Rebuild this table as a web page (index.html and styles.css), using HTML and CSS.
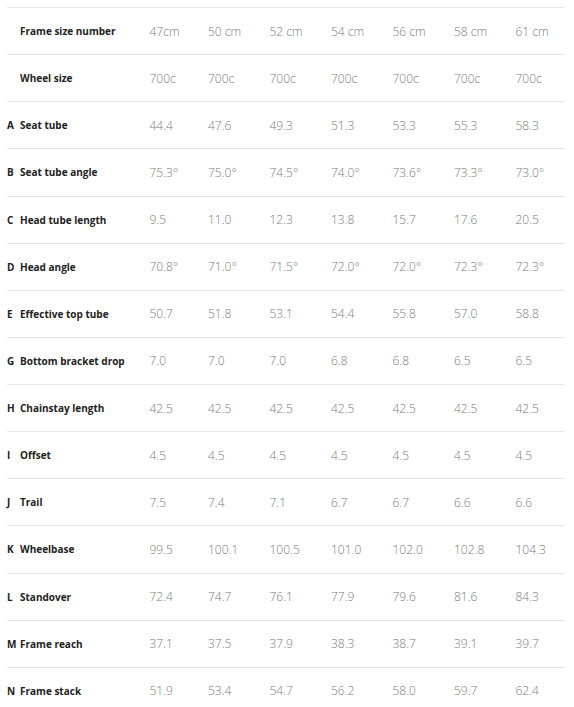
FILE: index.html
```html
<!DOCTYPE html>
<html>
<head>
<meta charset="utf-8">
<link rel="stylesheet" href="styles.css">
</head>
<body>
<div class="geo">
  <div class="row"><span class="key"></span><span class="label">Frame size number</span><span class="val">47cm</span><span class="val">50 cm</span><span class="val">52 cm</span><span class="val">54 cm</span><span class="val">56 cm</span><span class="val">58 cm</span><span class="val">61 cm</span></div>
  <div class="row"><span class="key"></span><span class="label">Wheel size</span><span class="val">700c</span><span class="val">700c</span><span class="val">700c</span><span class="val">700c</span><span class="val">700c</span><span class="val">700c</span><span class="val">700c</span></div>
  <div class="row"><span class="key">A</span><span class="label">Seat tube</span><span class="val">44.4</span><span class="val">47.6</span><span class="val">49.3</span><span class="val">51.3</span><span class="val">53.3</span><span class="val">55.3</span><span class="val">58.3</span></div>
  <div class="row"><span class="key">B</span><span class="label">Seat tube angle</span><span class="val">75.3°</span><span class="val">75.0°</span><span class="val">74.5°</span><span class="val">74.0°</span><span class="val">73.6°</span><span class="val">73.3°</span><span class="val">73.0°</span></div>
  <div class="row"><span class="key">C</span><span class="label">Head tube length</span><span class="val">9.5</span><span class="val">11.0</span><span class="val">12.3</span><span class="val">13.8</span><span class="val">15.7</span><span class="val">17.6</span><span class="val">20.5</span></div>
  <div class="row"><span class="key">D</span><span class="label">Head angle</span><span class="val">70.8°</span><span class="val">71.0°</span><span class="val">71.5°</span><span class="val">72.0°</span><span class="val">72.0°</span><span class="val">72.3°</span><span class="val">72.3°</span></div>
  <div class="row"><span class="key">E</span><span class="label">Effective top tube</span><span class="val">50.7</span><span class="val">51.8</span><span class="val">53.1</span><span class="val">54.4</span><span class="val">55.8</span><span class="val">57.0</span><span class="val">58.8</span></div>
  <div class="row"><span class="key">G</span><span class="label">Bottom bracket drop</span><span class="val">7.0</span><span class="val">7.0</span><span class="val">7.0</span><span class="val">6.8</span><span class="val">6.8</span><span class="val">6.5</span><span class="val">6.5</span></div>
  <div class="row"><span class="key">H</span><span class="label">Chainstay length</span><span class="val">42.5</span><span class="val">42.5</span><span class="val">42.5</span><span class="val">42.5</span><span class="val">42.5</span><span class="val">42.5</span><span class="val">42.5</span></div>
  <div class="row"><span class="key">I</span><span class="label">Offset</span><span class="val">4.5</span><span class="val">4.5</span><span class="val">4.5</span><span class="val">4.5</span><span class="val">4.5</span><span class="val">4.5</span><span class="val">4.5</span></div>
  <div class="row"><span class="key">J</span><span class="label">Trail</span><span class="val">7.5</span><span class="val">7.4</span><span class="val">7.1</span><span class="val">6.7</span><span class="val">6.7</span><span class="val">6.6</span><span class="val">6.6</span></div>
  <div class="row"><span class="key">K</span><span class="label">Wheelbase</span><span class="val">99.5</span><span class="val">100.1</span><span class="val">100.5</span><span class="val">101.0</span><span class="val">102.0</span><span class="val">102.8</span><span class="val">104.3</span></div>
  <div class="row"><span class="key">L</span><span class="label">Standover</span><span class="val">72.4</span><span class="val">74.7</span><span class="val">76.1</span><span class="val">77.9</span><span class="val">79.6</span><span class="val">81.6</span><span class="val">84.3</span></div>
  <div class="row"><span class="key">M</span><span class="label">Frame reach</span><span class="val">37.1</span><span class="val">37.5</span><span class="val">37.9</span><span class="val">38.3</span><span class="val">38.7</span><span class="val">39.1</span><span class="val">39.7</span></div>
  <div class="row"><span class="key">N</span><span class="label">Frame stack</span><span class="val">51.9</span><span class="val">53.4</span><span class="val">54.7</span><span class="val">56.2</span><span class="val">58.0</span><span class="val">59.7</span><span class="val">62.4</span></div>
</div>
</body>
</html>
```
FILE: styles.css
```css
html, body {
  margin: 0;
  padding: 0;
  background: #fff;
}
body {
  font-family: "Open Sans", "Liberation Sans", sans-serif;
  padding: 7px 0 0 7px;
}
.geo {
  width: 557px;
}
.row {
  display: grid;
  grid-template-columns: 13px 129.5px 58.5px repeat(5, 61.5px) 48.5px;
  align-items: center;
  height: 47.14px;
  box-sizing: border-box;
  border-top: 1px solid #e6e6e6;
  white-space: nowrap;
}
.key, .label {
  font-size: 10px;
  font-weight: 700;
  color: #222;
}
.val {
  font-size: 12px;
  font-weight: 300;
  color: #7a7a7a;
  overflow: visible;
}
```
